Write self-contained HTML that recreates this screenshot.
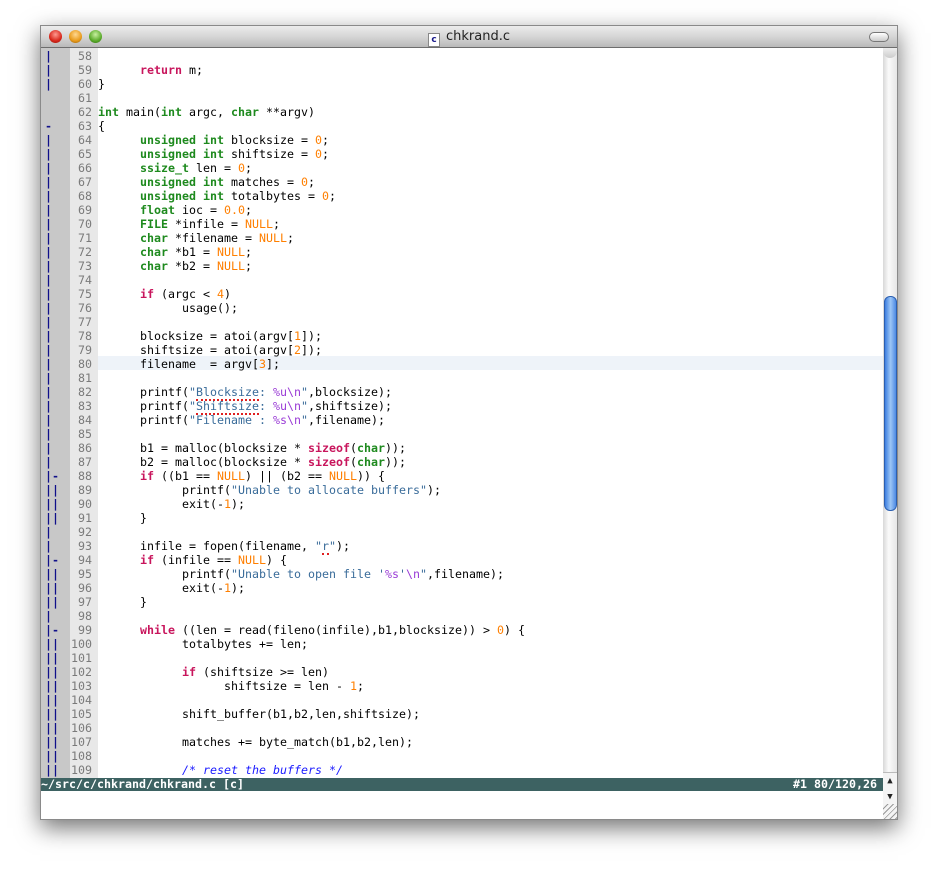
<!DOCTYPE html>
<html><head><meta charset="utf-8"><style>
body{margin:0;width:938px;height:875px;background:#fff;position:relative;overflow:hidden;font-family:"DejaVu Sans Mono","Liberation Mono",monospace}
#win{position:absolute;left:40px;top:25px;width:858px;height:795px;background:#fff;box-shadow:0 8px 22px rgba(0,0,0,.55);border:1px solid #8a8a8a;box-sizing:border-box}
#title{position:absolute;left:0;top:0;width:100%;height:22px;background:linear-gradient(#ececec,#d6d6d6 50%,#b9b9b9);border-bottom:1px solid #6d6d6d;box-sizing:border-box}
.btn{position:absolute;top:4px;width:13px;height:13px;border-radius:50%}
#ttl{position:absolute;left:0;width:100%;top:3px;text-align:center;font:13px "DejaVu Sans","Liberation Sans",sans-serif;color:#222}
#fold{position:absolute;left:0;top:22px;width:29px;height:730px;background:#c8c8c8}
#nums{position:absolute;left:29px;top:22px;width:28px;height:730px;background:#e8e8e8}
.l{position:absolute;height:14px;line-height:14px;font-size:11.63px;white-space:pre}
.f{left:4px;color:#10108a;width:26px;letter-spacing:0px;font-weight:bold}
.n{left:29px;width:22px;text-align:right;color:#7a7a7a}
.c{left:57px;color:#000}
.k{color:#c8155c;font-weight:bold}
.t{color:#1e8a1e;font-weight:bold}
.o{color:#ff7f00}
.s{color:#3a6c9a}
.p{color:#9a3cd6}
.cm{color:#1a1aff;font-style:italic}
.sp{border-bottom:2px dotted #e02020}
#hl{position:absolute;left:57px;top:330px;width:785px;height:14px;background:#eef3f9}
#status{position:absolute;left:0;top:752px;width:842px;height:13px;background:#3d6262;color:#fff;font-weight:bold;font-size:11.63px;line-height:13px;white-space:pre}
#sb{position:absolute;left:842px;top:22px;width:14px;height:771px;background:linear-gradient(90deg,#d8d8d8,#fafafa 40%,#e6e6e6)}
#thumb{position:absolute;left:1px;top:248px;width:11px;height:213px;border-radius:6px;background:linear-gradient(90deg,#3d7ee0,#9cc6f6 50%,#4d8ae4);border:1px solid #2c5fb0}
</style></head><body>
<div id="win">
<div id="title">
<div class="btn" style="left:8px;background:radial-gradient(circle at 50% 35%,#ff9a90,#d8261a 60%,#8a1a10)"></div>
<div class="btn" style="left:28px;background:radial-gradient(circle at 50% 35%,#ffd890,#e89a1a 60%,#8a5a10)"></div>
<div class="btn" style="left:48px;background:radial-gradient(circle at 50% 35%,#c8f0a0,#5aaa2a 60%,#2a6a10)"></div>
<div id="ttl"><span style="display:inline-block;width:10px;height:12px;border:1px solid #888;background:#fff;font-size:9px;line-height:12px;color:#1a1a8a;font-weight:bold;vertical-align:-2px;margin-right:6px">c</span>chkrand.c</div>
<div style="position:absolute;right:8px;top:6px;width:18px;height:8px;border:1px solid #777;border-radius:5px;background:linear-gradient(#fff,#ccc)"></div>
</div>
<div id="fold"></div><div id="nums"></div><div id="hl"></div>
<div id="code"></div>
<div id="status">~/src/c/chkrand/chkrand.c [c]<span style="position:absolute;right:6px">#1 80/120,26</span></div>
<div id="sb"><div style="position:absolute;left:0;top:0;width:14px;height:10px;border-radius:0 0 7px 7px;background:linear-gradient(#eee,#ccc)"></div><div id="thumb"></div>
<div style="position:absolute;left:0;top:724px;width:14px;height:32px;background:#f4f4f4;border-top:1px solid #bbb;font-size:9px;text-align:center;line-height:16px;color:#222">▲<br>▼</div>
<div style="position:absolute;left:0;top:756px;width:14px;height:15px;background:repeating-linear-gradient(135deg,#f4f4f4 0 3px,#999 3px 4px)"></div></div>
</div>
<script>
var L=[
["|","58",""],["|","59","      <b class=k>return</b> m;"],["|","60","}"],["","61",""],
["","62","<b class=t>int</b> main(<b class=t>int</b> argc, <b class=t>char</b> **argv)"],["-","63","{"],
["|","64","      <b class=t>unsigned int</b> blocksize = <span class=o>0</span>;"],
["|","65","      <b class=t>unsigned int</b> shiftsize = <span class=o>0</span>;"],
["|","66","      <b class=t>ssize_t</b> len = <span class=o>0</span>;"],
["|","67","      <b class=t>unsigned int</b> matches = <span class=o>0</span>;"],
["|","68","      <b class=t>unsigned int</b> totalbytes = <span class=o>0</span>;"],
["|","69","      <b class=t>float</b> ioc = <span class=o>0.0</span>;"],
["|","70","      <b class=t>FILE</b> *infile = <span class=o>NULL</span>;"],
["|","71","      <b class=t>char</b> *filename = <span class=o>NULL</span>;"],
["|","72","      <b class=t>char</b> *b1 = <span class=o>NULL</span>;"],
["|","73","      <b class=t>char</b> *b2 = <span class=o>NULL</span>;"],
["|","74",""],
["|","75","      <b class=k>if</b> (argc &lt; <span class=o>4</span>)"],
["|","76","            usage();"],["|","77",""],
["|","78","      blocksize = atoi(argv[<span class=o>1</span>]);"],
["|","79","      shiftsize = atoi(argv[<span class=o>2</span>]);"],
["|","80","      filename  = argv[<span class=o>3</span>];"],["|","81",""],
["|","82","      printf(<span class=s>\"<span class=sp>Blocksize</span>: <span class=p>%u\\n</span>\"</span>,blocksize);"],
["|","83","      printf(<span class=s>\"<span class=sp>Shiftsize</span>: <span class=p>%u\\n</span>\"</span>,shiftsize);"],
["|","84","      printf(<span class=s>\"Filename : <span class=p>%s\\n</span>\"</span>,filename);"],["|","85",""],
["|","86","      b1 = malloc(blocksize * <b class=k>sizeof</b>(<b class=t>char</b>));"],
["|","87","      b2 = malloc(blocksize * <b class=k>sizeof</b>(<b class=t>char</b>));"],
["|-","88","      <b class=k>if</b> ((b1 == <span class=o>NULL</span>) || (b2 == <span class=o>NULL</span>)) {"],
["||","89","            printf(<span class=s>\"Unable to allocate buffers\"</span>);"],
["||","90","            exit(-<span class=o>1</span>);"],["||","91","      }"],["|","92",""],
["|","93","      infile = fopen(filename, <span class=s>\"<span class=sp>r</span>\"</span>);"],
["|-","94","      <b class=k>if</b> (infile == <span class=o>NULL</span>) {"],
["||","95","            printf(<span class=s>\"Unable to open file '<span class=p>%s</span>'<span class=p>\\n</span>\"</span>,filename);"],
["||","96","            exit(-<span class=o>1</span>);"],["||","97","      }"],["|","98",""],
["|-","99","      <b class=k>while</b> ((len = read(fileno(infile),b1,blocksize)) &gt; <span class=o>0</span>) {"],
["||","100","            totalbytes += len;"],["||","101",""],
["||","102","            <b class=k>if</b> (shiftsize &gt;= len)"],
["||","103","                  shiftsize = len - <span class=o>1</span>;"],["||","104",""],
["||","105","            shift_buffer(b1,b2,len,shiftsize);"],["||","106",""],
["||","107","            matches += byte_match(b1,b2,len);"],["||","108",""],
["||","109","            <span class=cm>/* reset the buffers */</span>"]];
var h="";L.forEach(function(r,i){var y=23+i*14;
h+='<div class="l f" style="top:'+y+'px">'+r[0]+'</div><div class="l n" style="top:'+y+'px">'+r[1]+'</div><div class="l c" style="top:'+y+'px">'+r[2]+'</div>';});
document.getElementById("code").innerHTML=h;
</script>
</body></html>
